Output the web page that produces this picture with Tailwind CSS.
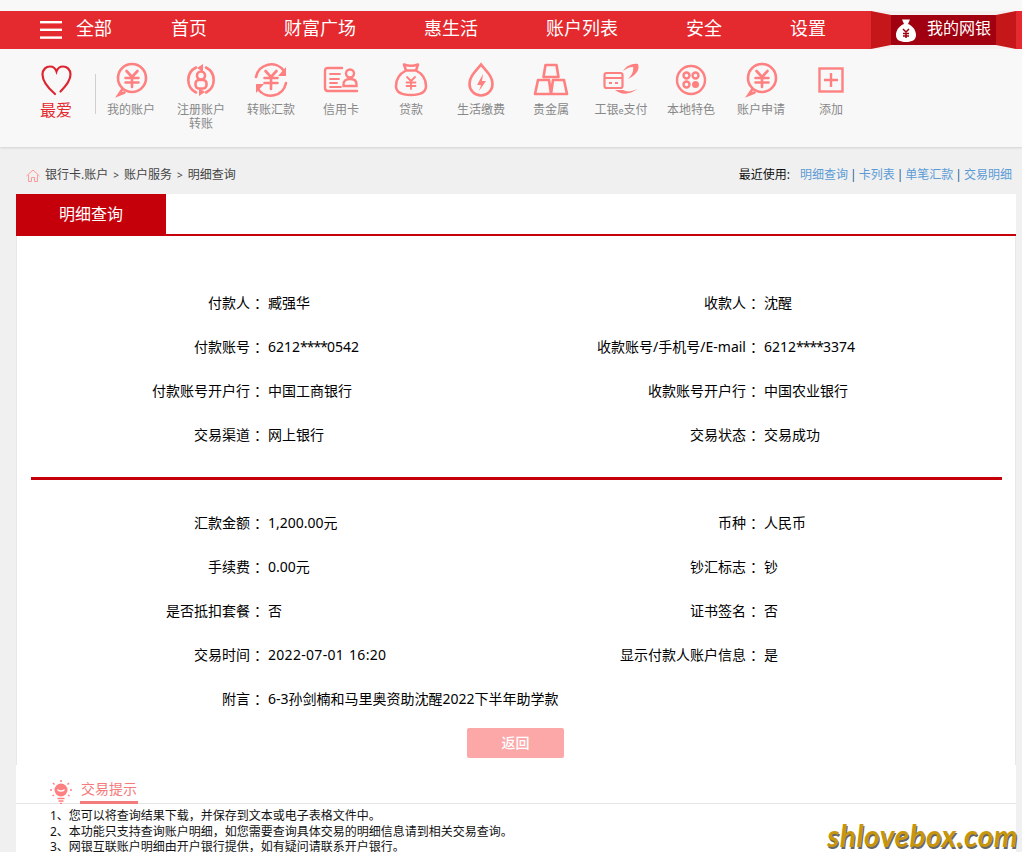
<!DOCTYPE html>
<html lang="zh"><head><meta charset="utf-8"><script src="https://cdn.jsdelivr.net/npm/@tailwindcss/browser@4"></script></head>
<body class="relative h-[852px] w-[1022px] overflow-hidden bg-[#f0f0f0] font-['Noto_Sans','Noto_Sans_CJK_SC',sans-serif] text-black">
<header class="bg-[#f8f8f8] pt-[11px] h-[147px] shadow-[0_1px_2px_rgba(0,0,0,0.12)]">
  <nav class="relative flex h-[38px] items-center bg-[#e4292f] pb-[4px] text-[18px] leading-[34px] text-white">
    <svg class="ml-[40px] mt-[4px] h-[18px] w-[22px]" viewBox="0 0 22 18" fill="#fff"><rect y="0" width="22" height="2.4"/><rect y="7.6" width="22" height="2.4"/><rect y="15.4" width="22" height="2.4"/></svg>
    <span class="ml-[14px] w-[36px]">全部</span>
    <span class="ml-[59px] w-[36px]">首页</span>
    <span class="ml-[77px] w-[72px]">财富广场</span>
    <span class="ml-[68px] w-[54px]">惠生活</span>
    <span class="ml-[68px] w-[72px]">账户列表</span>
    <span class="ml-[68px] w-[36px]">安全</span>
    <span class="ml-[68px] w-[36px]">设置</span>
    <div class="absolute left-[871px] top-0 h-[38px] w-[145px]">
      <svg class="absolute inset-0" width="145" height="38" viewBox="0 0 145 38"><rect width="145" height="38" fill="#f6efef"/><polygon points="0,0 20,4 125,4 145,0 145,38 125,34 20,34 0,38" fill="#c5161a"/><rect x="20" y="4" width="105" height="30" fill="#a0000f"/></svg>
      <svg class="absolute left-[24px] top-[7px]" width="22" height="25" viewBox="0 0 22 25"><path d="M7 1.500h8l-2 4.500c5 2 8 6.500 8 11 0 5-4 7-10 7s-10-2-10-7c0-4.500 3-9 8-11z" fill="#fff"/><path d="M8 11l3 3 3-3M11 14v6M8 15.500h6M8 18h6" stroke="#a0000f" stroke-width="1.500" fill="none"/></svg>
      <span class="absolute left-[56px] top-0 whitespace-nowrap text-[16px] leading-[34px]">我的网银</span>
    </div>
  </nav>
  <div class="flex pt-[13px]">
    <div class="ml-[40px] mt-[3px] flex w-[32px] flex-col items-center">
      <svg width="31" height="31" viewBox="0 0 31 31" fill="none"><path d="M14 29C7 23 1.500 17 1.500 9.500 1.500 4.500 5 1.500 9 1.500c3 0 5.500 2 6.500 5 1-3 3.500-5 6.500-5 4 0 7.500 3 7.500 8 0 6-4 11-10 17" stroke="#dd2730" stroke-width="2.200" stroke-linecap="round"/></svg>
      <span class="mt-[2px] whitespace-nowrap text-[16px] leading-[24px] text-[#e4292f]">最爱</span>
    </div>
    <div class="ml-[23px] mt-[12px] h-[40px] w-px bg-[#d0d0d0]"></div>
    <div class="flex text-center text-[12px] leading-[14px] text-[#888]">
      <a class="flex w-[70px] flex-col items-center"><svg class="h-[36px] w-[36px]" viewBox="0 0 36 36" fill="none" stroke="#ff8080" stroke-width="2.600" stroke-linecap="round"><circle cx="19" cy="16" r="14"/><path d="M9.500 27l-4 6 6-2.500M13.500 9l5.500 6 5.500-6M19 15v10M12.500 16h13M12.500 20.500h13"/></svg><span class="mt-[5px]">我的账户</span></a>
      <a class="flex w-[70px] flex-col items-center"><svg class="h-[36px] w-[36px]" viewBox="0 0 36 36" fill="none" stroke="#ff8080" stroke-width="2.600" stroke-linecap="round"><path d="M23 5.500A14 14 0 0 1 23 30.500M13 30.500A14 14 0 0 1 13 5.500"/><path d="M20 2l-6 4 6 4zM16 26l6 4-6 4z" fill="#ff8080" stroke="none"/><circle cx="18" cy="13.500" r="4"/><rect x="12.500" y="18" width="11" height="8.500" rx="3.500"/></svg><span class="mt-[5px]">注册账户<br>转账</span></a>
      <a class="flex w-[70px] flex-col items-center"><svg class="h-[36px] w-[36px]" viewBox="0 0 36 36" fill="none" stroke="#ff8080" stroke-width="2.600" stroke-linecap="round"><path d="M3 15A15.500 15.500 0 0 1 31 9M33 21A15.500 15.500 0 0 1 5 27"/><path d="M33 5v9h-8zM3 31v-9h8z" fill="#ff8080" stroke="none"/><path d="M12.500 9l5.500 6 5.500-6M18 15v12M11.500 16h13M11.500 21h13"/></svg><span class="mt-[5px]">转账汇款</span></a>
      <a class="flex w-[70px] flex-col items-center"><svg class="h-[36px] w-[36px]" viewBox="0 0 36 36" fill="none" stroke="#ff8080" stroke-width="2.400" stroke-linecap="round"><path d="M19 6H5c-2 0-3 1-3 3v17c0 2 1 3 3 3h29"/><path d="M7 12h10M7 17h9M7 21h7M7 25h11" stroke-width="1.800"/><circle cx="27" cy="11.500" r="4"/><path d="M20.500 24v-2c0-3 2-5 6.500-5s6.500 2 6.500 5v2z"/></svg><span class="mt-[5px]">信用卡</span></a>
      <a class="flex w-[70px] flex-col items-center"><svg class="h-[36px] w-[36px]" viewBox="0 0 36 36" fill="none" stroke="#ff8080" stroke-width="2.500" stroke-linecap="round" stroke-linejoin="round"><path d="M11 2.500c4 1.500 10 1.500 14 0l-2 6h-10zM13 8.500C6 12 3 18 3 24c0 6 5 9 15 9s15-3 15-9c0-6-3-12-10-15.500"/><path d="M14 15l4 4 4-4M18 19v8M13.500 20.500h9M13.500 24h9" stroke-width="1.800"/></svg><span class="mt-[5px]">贷款</span></a>
      <a class="flex w-[70px] flex-col items-center"><svg class="h-[36px] w-[36px]" viewBox="0 0 36 36" fill="none" stroke="#ff8080" stroke-width="2.600"><path d="M18 2.500C13 9 6.500 14 6.500 22a11.500 11.500 0 0 0 23 0C29.500 14 23 9 18 2.500z"/><path d="M20 12l-6 11h4l-2 6 7-10h-4z" fill="#ff8080" stroke="none"/></svg><span class="mt-[5px]">生活缴费</span></a>
      <a class="flex w-[70px] flex-col items-center"><svg class="h-[36px] w-[36px]" viewBox="0 0 36 36" fill="none" stroke="#ff8080" stroke-width="2.600" stroke-linejoin="round"><path d="M12.500 3h11l2 12h-15zM5 18h11l2 14H2zM20 18h11l3 14H18z"/></svg><span class="mt-[5px]">贵金属</span></a>
      <a class="flex w-[70px] flex-col items-center"><svg class="h-[36px] w-[36px]" viewBox="0 0 36 36" fill="none" stroke="#ff8080" stroke-width="2.200"><rect x="1.500" y="11" width="18" height="15" rx="2"/><path d="M2 16h17M6 21h3M12 21h3"/><path d="M20 9C23 4 29 1 35 2c2 6-2 11-10 15 4-4 6-8 5-12-4 0-7 2-10 4z" fill="#ff8080" stroke="none"/><path d="M12 28c6 5 15 5 22-1-6 3-10 3-14 1z" fill="#ff8080" stroke="none"/></svg><span class="mt-[5px] whitespace-nowrap">工银<span class="text-[9px]">e</span>支付</span></a>
      <a class="flex w-[70px] flex-col items-center"><svg class="h-[36px] w-[36px]" viewBox="0 0 36 36" fill="none" stroke="#ff8080" stroke-width="2.400"><circle cx="18" cy="18" r="14"/><circle cx="13.500" cy="13.500" r="3"/><circle cx="22.500" cy="13.500" r="3"/><circle cx="13.500" cy="22.500" r="3"/><circle cx="22.500" cy="22.500" r="3.500" fill="#ff8080" stroke="none"/></svg><span class="mt-[5px]">本地特色</span></a>
      <a class="flex w-[70px] flex-col items-center"><svg class="h-[36px] w-[36px]" viewBox="0 0 36 36" fill="none" stroke="#ff8080" stroke-width="2.600" stroke-linecap="round"><circle cx="19" cy="16" r="14"/><path d="M9.500 27l-4 6 6-2.500M13.500 9l5.500 6 5.500-6M19 15v10M12.500 16h13M12.500 20.500h13"/></svg><span class="mt-[5px]">账户申请</span></a>
      <a class="flex w-[70px] flex-col items-center"><svg class="h-[36px] w-[36px]" viewBox="0 0 36 36" fill="none" stroke="#ff8080" stroke-width="2.400"><rect x="6.500" y="6.500" width="23" height="23"/><path d="M18 11v14M11 18h14"/></svg><span class="mt-[5px]">添加</span></a>
    </div>
  </div>
</header>
<section class="flex h-[47px] items-center justify-between pl-[26px] pr-[10px] pt-[9px] text-[12px] leading-[20px]">
  <div class="flex items-center text-[#444]">
    <svg class="mr-[5px]" width="14" height="13" viewBox="0 0 14 13" fill="none" stroke="#ff9a9a"><path d="M0.500 7L7 1l6.500 6M2.500 6v6.500h3V8.500h3v4h3V6"/></svg>
    <span>银行卡.账户</span><span class="mx-[5px] text-[10px]">&gt;</span><span>账户服务</span><span class="mx-[5px] text-[10px]">&gt;</span><span>明细查询</span>
  </div>
  <div class="flex gap-[2px] text-[#1f5f99]">
    <span class="mr-[8px] text-[#111]">最近使用:</span>
    <a class="text-[#5b9bd5]">明细查询</a><span>|</span><a class="text-[#5b9bd5]">卡列表</a><span>|</span><a class="text-[#5b9bd5]">单笔汇款</a><span>|</span><a class="text-[#5b9bd5]">交易明细</a>
  </div>
</section>
<main class="mr-[6px] ml-[16px] bg-white">
  <div class="flex h-[42px] border-b-2 border-[#c6000b]">
    <div class="h-[42px] w-[150px] bg-[#c6000b] text-center text-[16px] leading-[40px] text-white">明细查询</div>
  </div>
  <div class="h-[529px] border-x border-[#e8e8e8] pt-[45px] text-[14px] leading-[44px]">
    <div class="grid grid-cols-[496px_1fr] -ml-px">
      <div class="flex"><span class="w-[248px] text-right">付款人<span class="relative left-[4px]">：</span></span><span class="pl-[4px]">臧强华</span></div>
      <div class="flex"><span class="w-[248px] text-right">收款人<span class="relative left-[4px]">：</span></span><span class="pl-[4px]">沈醒</span></div>
      <div class="flex"><span class="w-[248px] text-right">付款账号<span class="relative left-[4px]">：</span></span><span class="pl-[4px]">6212<span class="tracking-[-1px]">****</span>0542</span></div>
      <div class="flex"><span class="w-[248px] whitespace-nowrap text-right">收款账号/手机号/E-mail<span class="relative left-[4px]">：</span></span><span class="pl-[4px]">6212<span class="tracking-[-1px]">****</span>3374</span></div>
      <div class="flex"><span class="w-[248px] text-right">付款账号开户行<span class="relative left-[4px]">：</span></span><span class="pl-[4px]">中国工商银行</span></div>
      <div class="flex"><span class="w-[248px] text-right">收款账号开户行<span class="relative left-[4px]">：</span></span><span class="pl-[4px]">中国农业银行</span></div>
      <div class="flex"><span class="w-[248px] text-right">交易渠道<span class="relative left-[4px]">：</span></span><span class="pl-[4px]">网上银行</span></div>
      <div class="flex"><span class="w-[248px] text-right">交易状态<span class="relative left-[4px]">：</span></span><span class="pl-[4px]">交易成功</span></div>
    </div>
    <div class="mt-[20px] mb-[21px] ml-[14px] h-[3px] w-[971px] bg-[#c6000b]"></div>
    <div class="grid grid-cols-[496px_1fr] -ml-px">
      <div class="flex"><span class="w-[248px] text-right">汇款金额<span class="relative left-[4px]">：</span></span><span class="pl-[4px]">1,200.00元</span></div>
      <div class="flex"><span class="w-[248px] text-right">币种<span class="relative left-[4px]">：</span></span><span class="pl-[4px]">人民币</span></div>
      <div class="flex"><span class="w-[248px] text-right">手续费<span class="relative left-[4px]">：</span></span><span class="pl-[4px]">0.00元</span></div>
      <div class="flex"><span class="w-[248px] text-right">钞汇标志<span class="relative left-[4px]">：</span></span><span class="pl-[4px]">钞</span></div>
      <div class="flex"><span class="w-[248px] text-right">是否抵扣套餐<span class="relative left-[4px]">：</span></span><span class="pl-[4px]">否</span></div>
      <div class="flex"><span class="w-[248px] text-right">证书签名<span class="relative left-[4px]">：</span></span><span class="pl-[4px]">否</span></div>
      <div class="flex"><span class="w-[248px] text-right">交易时间<span class="relative left-[4px]">：</span></span><span class="pl-[4px] [word-spacing:1px] tracking-[0.3px]">2022-07-01 16:20</span></div>
      <div class="flex"><span class="w-[248px] text-right">显示付款人账户信息<span class="relative left-[4px]">：</span></span><span class="pl-[4px]">是</span></div>
      <div class="col-span-2 flex"><span class="w-[248px] text-right">附言<span class="relative left-[4px]">：</span></span><span class="pl-[4px]">6-3孙剑楠和马里奥资助沈醒2022下半年助学款</span></div>
    </div>
    <button class="mt-[7px] ml-[450px] block h-[30px] w-[97px] rounded-[2px] bg-[#fca8a8] text-[14px] font-medium leading-[30px] text-white">返回</button>
  </div>
  <div class="relative flex h-[39px] items-start border-b border-[#e5e5e5] pl-[34px] pt-[15px]">
    <svg width="22" height="24" viewBox="0 0 22 24" fill="none" stroke="#ff8080" stroke-width="1.500"><circle cx="11" cy="10" r="6.500" fill="#ff8080" stroke="none"/><path d="M7.500 9.500c1 2 6 2 7 0" stroke="#fff"/><path d="M11 0v2M3 3l1.500 1.500M19 3l-1.500 1.500M0 10h2M20 10h2M2.500 16L4 15M19.500 16L18 15M7.500 18.500h7M8.500 21h5M10 23.500h2"/></svg>
    <span class="absolute left-[64px] top-[14px] h-[25px] w-[58px] border-b-[3px] border-[#f37b7b] text-center text-[14px] leading-[20px] text-[#f37b7b]">交易提示</span>
  </div>
  <div class="h-[60px] pl-[34px] pt-[4px] text-[12px] leading-[15.500px] text-[#111]">
    <p>1、您可以将查询结果下载，并保存到文本或电子表格文件中。</p>
    <p>2、本功能只支持查询账户明细，如您需要查询具体交易的明细信息请到相关交易查询。</p>
    <p>3、网银互联账户明细由开户银行提供，如有疑问请联系开户银行。</p>
  </div>
</main>
<div class="absolute right-[4px] top-[817px] font-['Lato',sans-serif] text-[30px] font-bold italic leading-[36px] tracking-[0.4px] text-[#c8960c] [text-shadow:1px_2px_0_#666]">shlovebox.com</div>
</body></html>
